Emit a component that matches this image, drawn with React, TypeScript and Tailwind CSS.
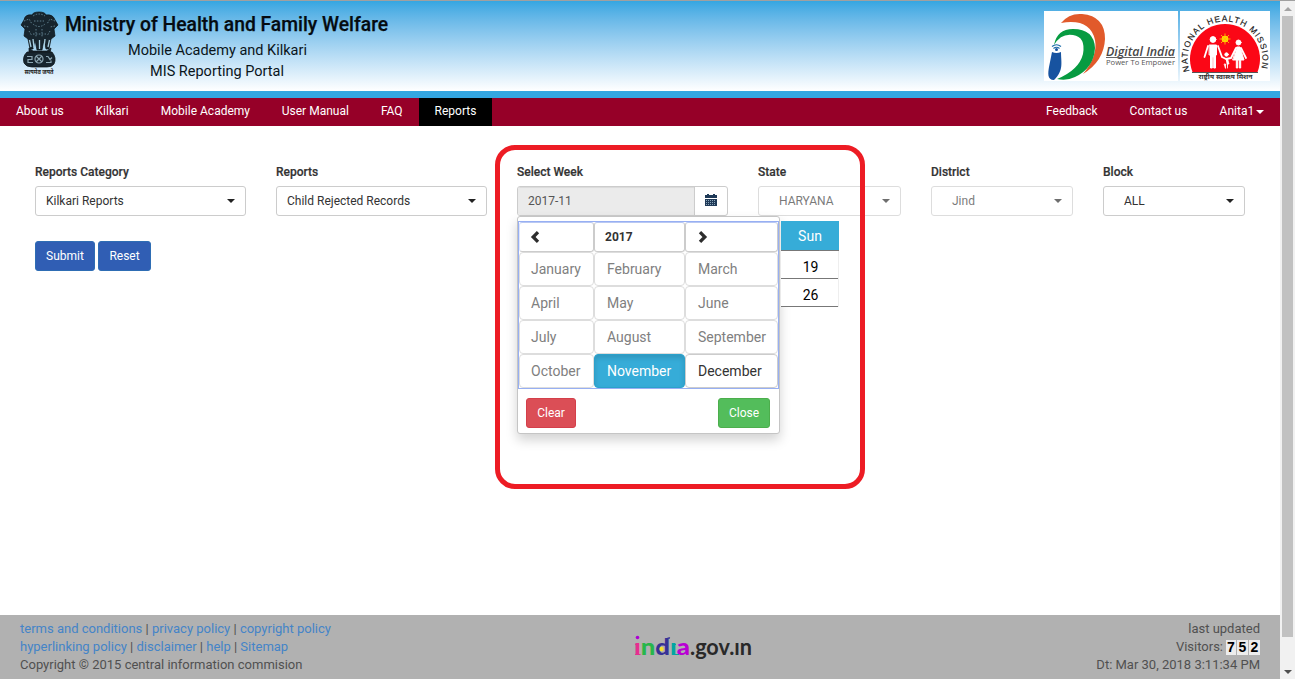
import React from "react";

const Caret = ({ className = "" }: { className?: string }) => (
  <span className={`inline-block h-0 w-0 border-x-4 border-t-4 border-x-transparent ${className}`} />
);

function Emblem() {
  return (
    <svg width="40" height="66" viewBox="0 0 40 66" className="mt-px block shrink-0 overflow-visible">
      <g fill="#17252e" stroke="#0c1216" strokeWidth=".7">
        <path d="M12 4Q13 1 19 1Q25 1 26 4Q33 3 35 9L38 14L34 18L35 25L31 28L29 38H26L24 29L22 39H17L15 29L13 38H10L8 28L4 25L5 18L1 14L4 9Q5 3 12 4Z" />
        <path d="M9 37L13 40H27L31 37L30 42H9Z" />
        <path d="M7 41H32Q37 47 34 53Q32 56 27 56H12Q6 56 4 52Q2 46 7 41Z" />
      </g>
      <g fill="none" stroke="#5f7f8d" strokeWidth="1" strokeDasharray="1.5 1.4">
        <path d="M13 5Q19 1 25 5M14 10H24M4 10L9 8L12 13M35 10L30 8L27 13M4 15L9 16M35 15L30 16M13 13Q19 18 25 13" />
        <path d="M9 20L12 25M30 20L27 25M16 18V26M22 18V26M13 23H26" />
      </g>
      <path d="M13 28L14 37M25 28L24 37M19.500 29V38M9.500 29L11 36M29.500 29L28 36" stroke="#a8cfe1" strokeWidth="1.300" />
      <g fill="none" stroke="#8ca6b2" strokeWidth="1.200">
        <circle cx="19" cy="48" r="4" />
        <path d="M16 45L22 51M22 45L16 51M7 45.500H12V48.500H8V51.500H13M26 45.500H28L30 48.500L32 46.500M26 51.500H31V49.500" />
      </g>
      <text x="19" y="63" textAnchor="middle" textLength="29" lengthAdjust="spacingAndGlyphs" fontSize="6.500" fontWeight="bold" fill="#222" className="font-['Noto_Sans_Devanagari','Noto_Sans',sans-serif]">सत्यमेव जयते</text>
    </svg>
  );
}

function DigitalIndia() {
  return (
    <svg width="134" height="70" viewBox="0 0 134 70" className="block overflow-visible bg-white">
      <path d="M17 12Q25 2 38 3Q61 5 61 28Q60 50 39 63Q54 45 51 29Q46 7 17 12Z" fill="#e15a2b" />
      <path d="M10 34Q13 18 29 18Q50 18 51 37Q50 57 31 66Q23 70 13 68Q35 59 39 43Q42 26 29 24Q17 22 10 34Z" fill="#079b41" />
      <path d="M8 41Q12.500 43 17 41C17 52 20 59 10 69C3 69 4 62 5 56Z" fill="#1753a0" />
      <circle cx="12.500" cy="38.500" r="1.500" fill="#1753a0" />
      <path d="M8 35.500Q12.500 32 17 35.500M9.500 37.500Q12.500 35 15.500 37.500" stroke="#1769a7" strokeWidth="1.200" fill="none" />
      <text x="62" y="45" textLength="69" lengthAdjust="spacingAndGlyphs" fontSize="12.500" fontStyle="italic" fontWeight="600" fill="#484747" className="font-['Open_Sans',sans-serif]">Digital India</text>
      <path d="M62 46.500H131" stroke="#666" />
      <text x="62" y="54" textLength="69" lengthAdjust="spacingAndGlyphs" fontSize="7.500" fill="#555" className="font-['Open_Sans',sans-serif]">Power To Empower</text>
    </svg>
  );
}

function HealthMission() {
  return (
    <svg width="90" height="70" viewBox="0 0 90 70" className="block overflow-visible bg-white">
      <path d="M12.500 61A35 35 0 1 1 77.500 61Z" fill="#fb0716" />
      <path d="M12 61.500H78" stroke="#555" />
      <defs><path id="missionArc" d="M9.500 60A37.500 37.500 0 1 1 80.500 60" /></defs>
      <text fontSize="8.500" fill="#171717" stroke="#171717" strokeWidth=".15" className="font-['Liberation_Sans',sans-serif]">
        <textPath href="#missionArc" textLength="139" lengthAdjust="spacing">NATIONAL HEALTH MISSION</textPath>
      </text>
      <circle cx="45" cy="28" r="3.300" fill="#ffe000" />
      <path d="M45 22.500V33.500M39.500 28H50.500M41 24L49 32M49 24L41 32" stroke="#ffbd00" strokeWidth=".9" />
      <g fill="#fff" stroke="#fff" strokeLinecap="round" strokeLinejoin="round">
        <circle cx="33" cy="28.500" r="2.900" /><circle cx="58.500" cy="31.500" r="2.500" /><circle cx="46.500" cy="43.500" r="1.700" />
        <path d="M29.500 34H36.500V44H35.500V57H33.700V46H32.300V57H30.500V44H29.500Z" />
        <path d="M57 36H60L64 49H60.700V57H59.300V49H57.700V57H56.300V49H53Z" />
        <path d="M28 35L24.500 46M38 35L42 46M56 37L51 47M61 37L66 47M42 46L46 48L51 47" fill="none" strokeWidth="1.800" />
        <path d="M45.500 47.500H47.500L49 53H47.500V57M45.500 57V53H44.500Z" strokeWidth=".8" />
      </g>
      <text x="45.500" y="67.500" textAnchor="middle" textLength="54" lengthAdjust="spacingAndGlyphs" fontSize="6.500" fontWeight="bold" fill="#333" className="font-['Noto_Sans_Devanagari','Noto_Sans',sans-serif]">राष्ट्रीय स्वास्थ्य मिशन</text>
    </svg>
  );
}

function Header() {
  return (
    <header className="flex h-[97px] items-start justify-between border-b-[7px] border-[#34a6e1] bg-linear-to-b from-[#34a6e1] to-white [background-clip:padding-box]">
      <div className="flex pl-5 pt-[9px]">
        <Emblem />
        <div className="-ml-px w-[336px] text-center text-[14.5px] text-[#0b151b]">
          <h1 className="ml-1.5 mt-0.5 whitespace-nowrap text-left text-[19.3px] font-medium leading-[26px] text-[#050b10] [-webkit-text-stroke:0.25px_#050b10]">Ministry of Health and Family Welfare</h1>
          <p className="mt-0.5 pr-[19px] leading-[22px]">Mobile Academy and Kilkari</p>
          <p className="pr-5 leading-5">MIS Reporting Portal</p>
        </div>
      </div>
      <div className="mr-2.5 mt-2.5 flex gap-0.5">
        <DigitalIndia />
        <HealthMission />
      </div>
    </header>
  );
}

function Navigation() {
  return (
    <nav className="flex h-7 justify-between bg-[#960028] text-[12px] leading-[26px] text-white">
      <div className="flex">
        <a className="w-[79.6px] pl-4">About us</a>
        <a className="w-[65.2px] pl-4">Kilkari</a>
        <a className="w-[121px] pl-4">Mobile Academy</a>
        <a className="w-[99.2px] pl-4">User Manual</a>
        <a className="w-[54px] pl-4">FAQ</a>
        <a className="w-[73px] bg-black pl-[15.6px]">Reports</a>
      </div>
      <div className="flex">
        <a className="w-[83.6px]">Feedback</a>
        <a className="w-[90px]">Contact us</a>
        <a className="flex w-[60.4px] items-center pb-0.5">Anita1<Caret className="ml-0.5 mt-0.5 border-t-white" /></a>
      </div>
    </nav>
  );
}

type FieldProps = { label: string; value: string; width: string; disabled?: boolean; indent?: boolean };

function SelectField({ label, value, width, disabled, indent }: FieldProps) {
  return (
    <div className={width}>
      <label className="block pb-[5px] text-[12px] font-medium leading-[18px] text-[#333] [-webkit-text-stroke:0.2px_#333]">{label}</label>
      <div className={`flex h-[30px] items-center justify-between rounded-[3px] border border-[#ccc] bg-white pr-[10px] text-[12px] text-[#333] ${indent ? "pl-5" : "pl-2.5"} ${disabled ? "opacity-65" : ""}`}>
        <span>{value}</span><Caret className="border-t-[#222]" />
      </div>
    </div>
  );
}

const months = ["January", "February", "March", "April", "May", "June", "July", "August", "September", "October", "November", "December"];

function Chevron({ right = false }: { right?: boolean }) {
  return (
    <svg width="10" height="12" viewBox="0 0 10 12" className={right ? "rotate-180" : ""}>
      <path d="M8 1.200L3.200 6L8 10.800" fill="none" stroke="#2d2d2d" strokeWidth="3.300" />
    </svg>
  );
}

function MonthPicker() {
  return (
    <div className="absolute left-0 top-[53px] z-10 h-[218px] w-[263px] rounded-[3px] border border-[#c5c5c5] bg-white pt-1 shadow-[0_6px_12px_rgba(0,0,0,0.175)]">
      <div className="grid h-[168px] grid-cols-[75px_91px_93px] grid-rows-[30px_34px_34px_34px_34px] border border-[#97aff3]">
        <div className="flex items-center rounded-[3px] border border-[#ccc] border-l-[#dfe6fb] border-t-[#b9c8f2] bg-white pb-px pl-2.5"><Chevron /></div>
        <div className="flex items-center rounded-[3px] border border-[#ccc] border-t-[#b9c8f2] bg-white pl-2.5 text-[12px] font-bold text-[#333]">2017</div>
        <div className="flex items-center rounded-[3px] border border-[#ccc] border-t-[#b9c8f2] bg-white pb-px pl-3"><Chevron right /></div>
        {months.map((month, index) => {
          const state = month === "November"
            ? "border-[#2ba1cb] bg-[#36acd8] text-white shadow-[inset_0_3px_5px_rgba(0,0,0,0.125)]"
            : month === "December" ? "border-[#ccc] bg-white text-[#333]" : "border-[#ddd] bg-white text-[#808080]";
          return <button key={month} className={`rounded-[4px] border text-left text-[14px] leading-5 ${index % 3 === 0 ? "pl-[11px]" : "pl-3"} ${state}`}>{month}</button>;
        })}
      </div>
      <div className="flex justify-between pl-2 pr-[9px] pt-[9px] text-[12px] text-white">
        <button className="h-[30px] w-[50px] rounded-[3px] border border-[#d43f4a] bg-[#db4e56]">Clear</button>
        <button className="h-[30px] w-[52px] rounded-[3px] border border-[#4cae4c] bg-[#53bd5b]">Close</button>
      </div>
    </div>
  );
}

function WeekField() {
  return (
    <div className="relative w-[211px]">
      <label className="block pb-[5px] text-[12px] font-medium leading-[18px] text-[#333] [-webkit-text-stroke:0.2px_#333]">Select Week</label>
      <div className="flex h-[30px] overflow-hidden rounded-[3px] border border-[#ccc]">
        <div className="flex flex-1 items-center border-r border-[#ccc] bg-[#ebebeb] pl-2.5 text-[12px] text-[#555] shadow-[inset_0_1px_1px_rgba(0,0,0,0.075)]">2017-11</div>
        <div className="flex w-8 items-center justify-center pb-0.5">
          <svg width="12" height="13" viewBox="0 0 12 13" shapeRendering="crispEdges">
            <path d="M0 1H2V0H4V1H8V0H10V1H12V4H0ZM0 5H12V12H0Z" fill="#1f3a58" />
            <path d="M1 6.500H11M1 8.500H11M1 10.500H11" stroke="#8ba5b9" strokeDasharray="1 1" />
          </svg>
        </div>
      </div>
      <MonthPicker />
      <div className="absolute left-[264px] top-[58px] z-10 w-[58px] border-r border-[#eee] bg-white text-center text-[14px] text-black">
        <div className="-mr-px h-[30px] border-b border-[#777] bg-[#36acd8] leading-[31px] text-white">Sun</div>
        <div className="h-7 border-b border-[#777] pl-0.5 leading-[33px]">19</div>
        <div className="h-7 border-b border-[#777] pl-0.5 leading-[33px]">26</div>
      </div>
    </div>
  );
}

function GovLogo() {
  return (
    <svg width="122" height="32" viewBox="0 0 122 32" className="mt-4 overflow-visible">
      <g fontSize="22" className="font-['Lato',sans-serif]">
        <text x="3" y="24" textLength="56" lengthAdjust="spacingAndGlyphs" fontWeight="900"><tspan fill="#e5308f">ı</tspan><tspan fill="#27b64b">n</tspan><tspan fill="#373296">d</tspan><tspan fill="#00a6a1">ı</tspan><tspan fill="#b900d4">a</tspan></text>
        <text x="59" y="24" textLength="62" lengthAdjust="spacingAndGlyphs" fontWeight="700" fill="#292929">.gov.ın</text>
      </g>
      <circle cx="6.500" cy="6.500" r="1.800" fill="#ae00d4" />
      <circle cx="30.500" cy="18" r="2.200" fill="#f6df2b" />
      <path d="M36 9Q36 6.500 39 7" fill="none" stroke="#373296" strokeWidth="1.500" />
      <path d="M4 13.500H7M4 23.500H9.500" stroke="#e5308f" strokeWidth="1.200" />
      <path d="M42 13.500H45M42 23.500H48" stroke="#00a6a1" strokeWidth="1.200" />
    </svg>
  );
}

function Footer() {
  return (
    <footer className="flex h-16 bg-[#b1b1b1] px-5 text-[13px] leading-[18px] text-[#505050]">
      <div className="w-[611px] pt-[5px] [&_a]:text-[#4484c8]">
        <p><a>terms and conditions</a> | <a>privacy policy</a> | <a>copyright policy</a></p>
        <p><a>hyperlinking policy</a> | <a>disclaimer</a> | <a>help</a> | <a>Sitemap</a></p>
        <p>Copyright © 2015 central information commision</p>
      </div>
      <GovLogo />
      <div className="flex-1 pt-[5px] text-right">
        <p>last updated</p>
        <p className="flex justify-end">Visitors:<span className="ml-[3px] mt-[2px] flex h-[15px] gap-px text-center font-['Liberation_Sans',sans-serif] text-[14px] font-bold leading-[15px] text-black"><span className="w-[10px] bg-[#ededed]">7</span><span className="w-[11px] bg-[#ededed]">5</span><span className="w-[11px] bg-[#ededed]">2</span></span></p>
        <p>Dt: Mar 30, 2018 3:11:34 PM</p>
      </div>
    </footer>
  );
}

export default function App() {
  return (
    <div className="relative flex h-[679px] w-[1295px] overflow-hidden border-t border-[#a0a0a0] bg-white font-['Roboto','Noto_Sans',sans-serif]">
      <div className="flex w-[1280px] flex-col">
        <Header />
        <Navigation />
        <main className="flex-1 px-[35px] pt-[37px]">
          <div className="flex gap-[30px]">
            <SelectField label="Reports Category" value="Kilkari Reports" width="w-[211px]" />
            <SelectField label="Reports" value="Child Rejected Records" width="w-[211px]" />
            <WeekField />
            <SelectField label="State" value="HARYANA" width="w-[143px]" disabled indent />
            <SelectField label="District" value="Jind" width="w-[142px]" disabled indent />
            <SelectField label="Block" value="ALL" width="w-[142px]" indent />
          </div>
          <div className="mt-[25px] flex gap-[3px] text-[12px] text-white">
            <button className="h-[30px] w-[60px] rounded-[3px] border border-[#2e6db4] bg-[#305eb4]">Submit</button>
            <button className="h-[30px] w-[53px] rounded-[3px] border border-[#2e6db4] bg-[#305eb4]">Reset</button>
          </div>
        </main>
        <Footer />
      </div>
      <div className="flex w-[15px] flex-col items-center justify-between bg-[#f1f1f1] pb-[5px] pt-1.5">
        <span className="h-0 w-0 border-x-4 border-b-4 border-x-transparent border-b-[#a3a3a3]" />
        <span className="mb-[33px] mt-[5px] w-[11px] flex-1 bg-[#c1c1c1]" />
        <Caret className="border-t-[#505050]" />
      </div>
      <div className="pointer-events-none absolute left-[495px] top-[144px] z-20 h-[344px] w-[370px] rounded-[20px] border-[5px] border-[#ed1c24]" />
    </div>
  );
}
